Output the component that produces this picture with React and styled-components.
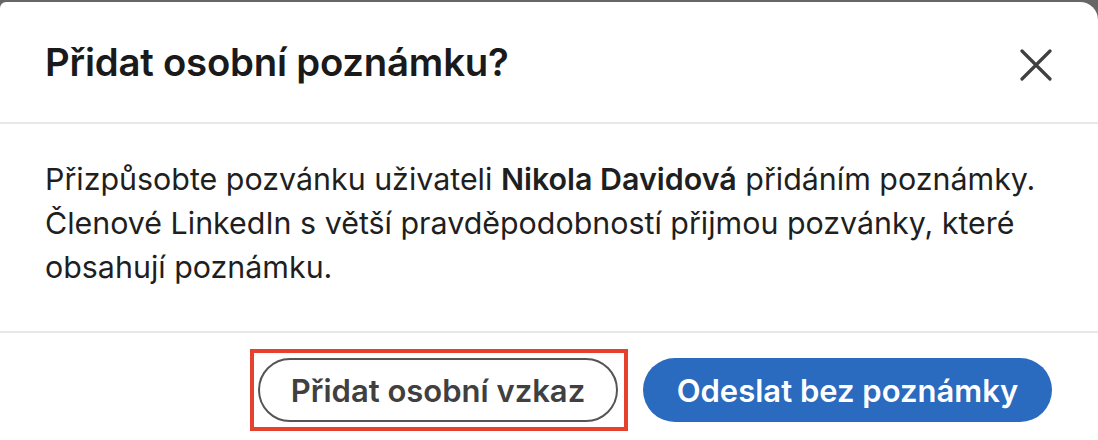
import styled, { createGlobalStyle } from 'styled-components';

const GlobalStyle = createGlobalStyle`
	html, body {
		margin: 0;
		padding: 0;
		background: #666666;
	}
	body {
		font-family: Inter, 'Noto Sans', 'Liberation Sans', sans-serif;
		-webkit-font-smoothing: antialiased;
	}
`;

const Backdrop = styled.div`
	height: 440px;
	padding-top: 2px;
	box-sizing: border-box;
	background: #666666;
	overflow: hidden;
`;

const Modal = styled.div`
	height: 438px;
	background: #ffffff;
	border-radius: 6px 18px 0 0;
	color: #1f1f1f;
`;

const Header = styled.div`
	display: flex;
	align-items: center;
	justify-content: space-between;
	height: 120px;
	padding: 0 46px 0 45px;
	border-bottom: 2px solid #e8e8e8;
`;

const Title = styled.h2`
	margin: 0;
	font-size: 38.3px;
	font-weight: 600;
	letter-spacing: -0.2px;
	line-height: 48px;
	color: #1a1a1a;
`;

const CloseButton = styled.button`
	width: 32px;
	height: 32px;
	padding: 0;
	border: none;
	background: none;
	display: flex;
	align-items: center;
	justify-content: center;
	color: #404040;
	margin-top: 6px;
`;

const Body = styled.div`
	padding: 33px 20px 42px 45px;
	border-bottom: 2px solid #e8e8e8;
	font-size: 30.4px;
	line-height: 44px;
	color: #1f1f1f;
`;

const Name = styled.strong`
	font-weight: 600;
`;

const Footer = styled.div`
	display: flex;
	justify-content: flex-end;
	align-items: center;
	gap: 15px;
	padding: 16px 46px 0 0;
`;

const Highlight = styled.div`
	border: 4px solid #e5412d;
	padding: 5px 6px 5px 4px;
`;

const Button = styled.button`
	height: 64px;
	box-sizing: border-box;
	border-radius: 32px;
	font-family: inherit;
	font-size: 31px;
	font-weight: 600;
	padding: 0;
	cursor: pointer;
	white-space: nowrap;
`;

const SecondaryButton = styled(Button)`
	width: 360px;
	background: #ffffff;
	color: #404040;
	border: 2px solid #555555;
`;

const PrimaryButton = styled(Button)`
	width: 409px;
	background: #2a6abf;
	color: #ffffff;
	border: none;
`;

function CloseIcon() {
	return (
		<svg width="32" height="32" viewBox="0 0 32 32" fill="none">
			<path d="M2 2 L30 30 M30 2 L2 30" stroke="currentColor" strokeWidth="3.2" strokeLinecap="round" />
		</svg>
	);
}

function App() {
	return (
		<Backdrop>
			<GlobalStyle />
			<Modal>
				<Header>
					<Title>Přidat osobní poznámku?</Title>
					<CloseButton aria-label="Zavřít">
						<CloseIcon />
					</CloseButton>
				</Header>
				<Body>
					Přizpůsobte pozvánku uživateli <Name>Nikola Davidová</Name> přidáním poznámky. Členové
					LinkedIn s větší pravděpodobností přijmou pozvánky, které obsahují poznámku.
				</Body>
				<Footer>
					<Highlight>
						<SecondaryButton>Přidat osobní vzkaz</SecondaryButton>
					</Highlight>
					<PrimaryButton>Odeslat bez poznámky</PrimaryButton>
				</Footer>
			</Modal>
		</Backdrop>
	);
}

export default App;
